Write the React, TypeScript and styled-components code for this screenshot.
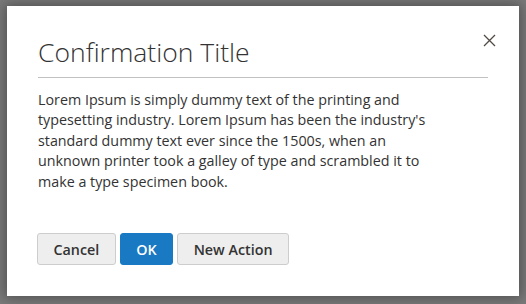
import styled, { createGlobalStyle } from "styled-components";

const GlobalStyle = createGlobalStyle`
  html, body {
    margin: 0;
    padding: 0;
    background: #7a7a7a;
  }
  body {
    font-family: "Open Sans", "Liberation Sans", sans-serif;
    color: #333;
  }
`;

const Overlay = styled.div`
  width: 526px;
  height: 304px;
  box-sizing: border-box;
  padding: 6px 7px 8px 7px;
  display: flex;
`;

const Dialog = styled.div`
  position: relative;
  flex: 1;
  display: flex;
  flex-direction: column;
  background: #fff;
  box-shadow: 0 0 12px 2px rgba(0, 0, 0, 0.35);
  padding: 0 31px;
`;

const Header = styled.header`
  padding-top: 30px;
`;

const Title = styled.h1`
  margin: 0;
  font-size: 26.5px;
  font-weight: 300;
  line-height: 32px;
  color: #333;
  padding-bottom: 9px;
  border-bottom: 1px solid #c1c1c1;
`;

const CloseButton = styled.button`
  position: absolute;
  top: 21px;
  right: 17px;
  width: 26px;
  height: 26px;
  padding: 0;
  border: none;
  background: transparent;
  display: flex;
  align-items: center;
  justify-content: center;
  cursor: pointer;
`;

const Body = styled.p`
  margin: 12px 0 0;
  max-width: 400px;
  font-size: 14.3px;
  line-height: 20.4px;
  color: #333;
`;

const Footer = styled.footer`
  display: flex;
  gap: 4px;
  margin-top: 41px;
  margin-left: -1px;
`;

const Button = styled.button<{ $primary?: boolean }>`
  height: 32px;
  padding: 0 15.5px;
  font-family: "Open Sans", "Liberation Sans", sans-serif;
  font-size: 14.3px;
  font-weight: 600;
  border-radius: 3px;
  border: 1px solid ${({ $primary }) => ($primary ? "#1979c3" : "#cdcdcd")};
  background: ${({ $primary }) => ($primary ? "#1979c3" : "#eee")};
  color: ${({ $primary }) => ($primary ? "#fff" : "#333")};
  cursor: pointer;
`;

export default function App() {
    return (
        <>
            <GlobalStyle />
            <Overlay>
                <Dialog>
                    <Header>
                        <Title>Confirmation Title</Title>
                        <CloseButton aria-label="Close">
                            <svg width="13" height="13" viewBox="0 0 13 13">
                                <path d="M1 1 L12 12 M12 1 L1 12" stroke="#514943" strokeWidth="1.3" />
                            </svg>
                        </CloseButton>
                    </Header>
                    <Body>
                        Lorem Ipsum is simply dummy text of the printing and typesetting industry. Lorem Ipsum has
                        been the industry's standard dummy text ever since the 1500s, when an unknown printer took a
                        galley of type and scrambled it to make a type specimen book.
                    </Body>
                    <Footer>
                        <Button>Cancel</Button>
                        <Button $primary>OK</Button>
                        <Button>New Action</Button>
                    </Footer>
                </Dialog>
            </Overlay>
        </>
    );
}
